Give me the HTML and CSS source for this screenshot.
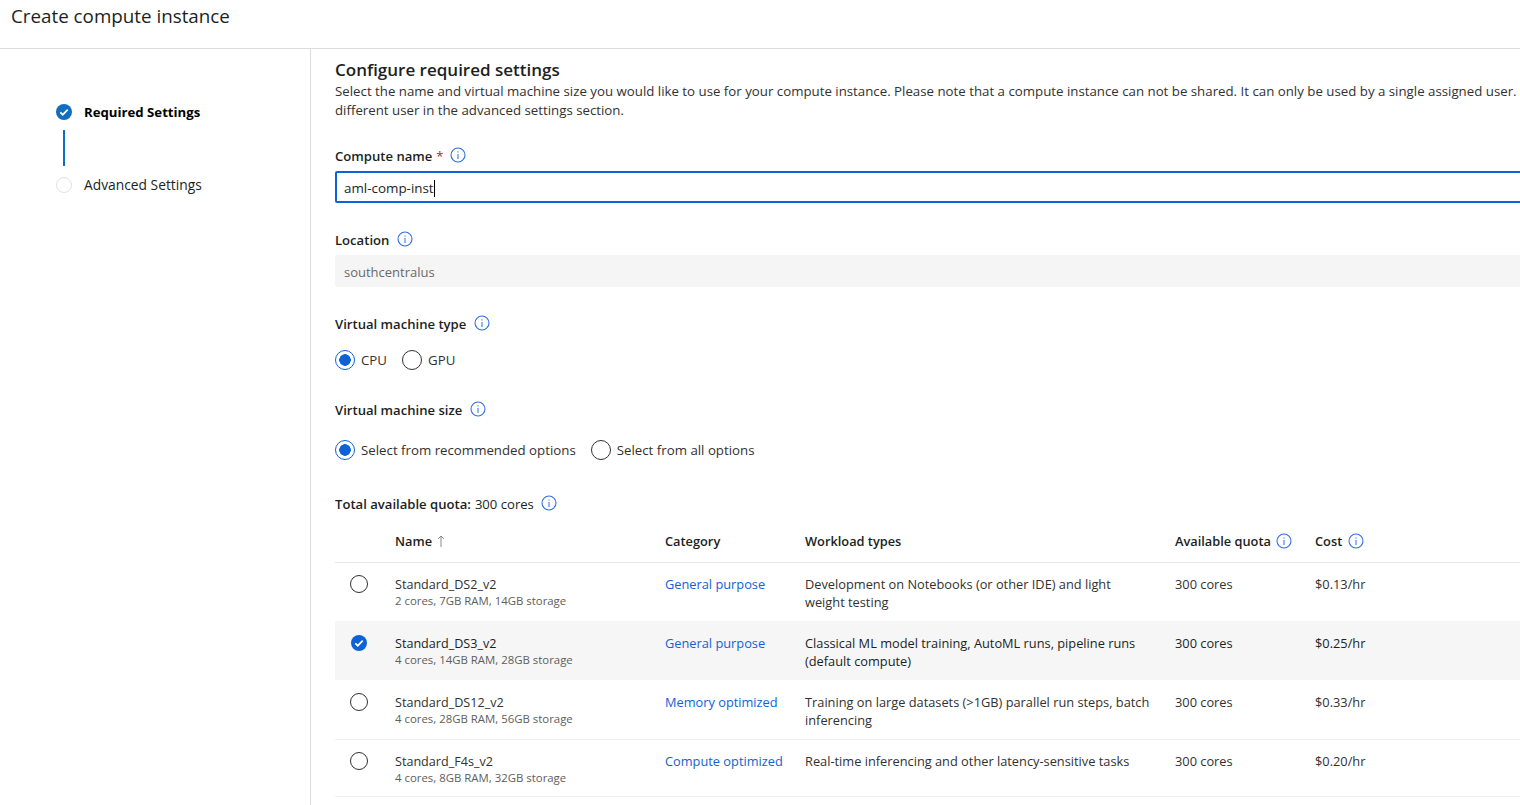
FILE: index.html
```html
<!DOCTYPE html>
<html lang="en">
<head>
    <meta charset="UTF-8">
    <title>Create compute instance</title>
    <link rel="stylesheet" href="styles.css">
</head>
<body>
    <svg class="defs" width="0" height="0">
        <symbol id="info" viewBox="0 0 16 16">
            <circle cx="8" cy="8" r="7" fill="none" stroke="#2f6fe0" stroke-width="1.1"/>
            <rect x="7.5" y="7" width="1" height="5" fill="#2f6fe0"/>
            <rect x="7.5" y="4.3" width="1" height="1.2" fill="#2f6fe0"/>
        </symbol>
        <symbol id="check" viewBox="0 0 16 16">
            <circle cx="8" cy="8" r="8" fill="currentColor"/>
            <path d="M4.3 8.3l2.5 2.4 4.9-5" fill="none" stroke="#fff" stroke-width="1.7"/>
        </symbol>
    </svg>

    <header class="page-header">Create compute instance</header>

    <div class="layout">
        <nav class="steps">
            <div class="step step-done">
                <svg class="step-icon"><use href="#check"/></svg>
                <span>Required Settings</span>
            </div>
            <div class="step-line"></div>
            <div class="step step-next">
                <span class="step-circle"></span>
                <span>Advanced Settings</span>
            </div>
        </nav>

        <main class="content">
            <h2>Configure required settings</h2>
            <p class="intro">Select the name and virtual machine size you would like to use for your compute instance. Please note that a compute instance can not be shared. It can only be used by a single assigned user.<br>different user in the advanced settings section.</p>

            <div class="label label-name">Compute name <span class="req">*</span> <svg class="info"><use href="#info"/></svg></div>
            <div class="input input-active"><span>aml-comp-inst</span><span class="caret"></span></div>

            <div class="label label-location">Location <svg class="info"><use href="#info"/></svg></div>
            <div class="input input-disabled">southcentralus</div>

            <div class="label label-type">Virtual machine type <svg class="info"><use href="#info"/></svg></div>
            <div class="radios radios-type">
                <label class="radio"><span class="dot on"></span>CPU</label>
                <label class="radio"><span class="dot"></span>GPU</label>
            </div>

            <div class="label label-size">Virtual machine size <svg class="info"><use href="#info"/></svg></div>
            <div class="radios radios-size">
                <label class="radio"><span class="dot on"></span>Select from recommended options</label>
                <label class="radio"><span class="dot"></span>Select from all options</label>
            </div>

            <div class="label label-quota">Total available quota: <span class="normal">300 cores</span> <svg class="info"><use href="#info"/></svg></div>

            <div class="table">
                <div class="row head">
                    <div></div>
                    <div>Name <svg class="sort" viewBox="0 0 8 12"><path d="M4 12V1M1.2 3.8L4 1l2.8 2.8" fill="none" stroke="#8f8a80"/></svg></div>
                    <div>Category</div>
                    <div>Workload types</div>
                    <div>Available quota <svg class="info"><use href="#info"/></svg></div>
                    <div>Cost <svg class="info"><use href="#info"/></svg></div>
                </div>
                <div class="row row-before">
                    <div><span class="pick"></span></div>
                    <div class="name">Standard_DS2_v2<small>2 cores, 7GB RAM, 14GB storage</small></div>
                    <div><a>General purpose</a></div>
                    <div>Development on Notebooks (or other IDE) and light weight testing</div>
                    <div>300 cores</div>
                    <div>$0.13/hr</div>
                </div>
                <div class="row selected">
                    <div><svg class="picked"><use href="#check"/></svg></div>
                    <div class="name">Standard_DS3_v2<small>4 cores, 14GB RAM, 28GB storage</small></div>
                    <div><a>General purpose</a></div>
                    <div>Classical ML model training, AutoML runs, pipeline runs (default compute)</div>
                    <div>300 cores</div>
                    <div>$0.25/hr</div>
                </div>
                <div class="row row-after">
                    <div><span class="pick"></span></div>
                    <div class="name">Standard_DS12_v2<small>4 cores, 28GB RAM, 56GB storage</small></div>
                    <div><a>Memory optimized</a></div>
                    <div>Training on large datasets (&gt;1GB) parallel run steps, batch inferencing</div>
                    <div>300 cores</div>
                    <div>$0.33/hr</div>
                </div>
                <div class="row row-last">
                    <div><span class="pick"></span></div>
                    <div class="name">Standard_F4s_v2<small>4 cores, 8GB RAM, 32GB storage</small></div>
                    <div><a>Compute optimized</a></div>
                    <div>Real-time inferencing and other latency-sensitive tasks</div>
                    <div>300 cores</div>
                    <div>$0.20/hr</div>
                </div>
            </div>
        </main>
    </div>
</body>
</html>
```

FILE: styles.css
```css
html, body {
    height: 100%;
}

body {
    margin: 0;
    font-family: "Open Sans", "Noto Sans", sans-serif;
    font-size: 13.27px;
    color: #323130;
    background-color: #fff;
    overflow: hidden;
}

.defs {
    display: block;
    height: 0;
}

.page-header {
    height: 48px;
    padding-left: 11px;
    font-size: 18.8px;
    line-height: 33px;
    border-bottom: 1px solid #dcdcdc;
    color: #201f1e;
}

.layout {
    display: flex;
    height: 756px;
}

.steps {
    width: 311px;
    flex: none;
    box-sizing: border-box;
    padding: 54px 0 0 56px;
    border-right: 1px solid #dcdcdc;
}

.step {
    display: flex;
    align-items: center;
    gap: 12px;
    height: 18px;
    font-size: 13.8px;
    color: #201f1e;
}

.step-done {
    font-size: 13.2px;
    font-weight: 700;
    color: #000;
}

.step-next span:last-child {
    margin-top: -2px;
}

.step-icon {
    width: 16px;
    height: 16px;
    color: #106ebe;
}

.step-circle {
    width: 14px;
    height: 14px;
    border: 1px solid #e6e1e1;
    border-radius: 50%;
}

.step-line {
    width: 2px;
    height: 36px;
    margin: 9px 0 10px 7px;
    background-color: #106ebe;
}

.content {
    flex: 1;
    min-width: 0;
    padding-left: 24px;
    overflow: hidden;
}

h2 {
    margin: 9px 0 0;
    font-size: 17px;
    line-height: 24px;
    font-weight: 600;
    color: #201f1e;
}

.intro {
    width: 1300px;
    margin: 0;
    line-height: 19px;
    white-space: nowrap;
}

.label {
    display: flex;
    align-items: center;
    gap: 4px;
    height: 20px;
    font-size: 13.1px;
    font-weight: 600;
    color: #201f1e;
}

.label-name { margin-top: 26px; }
.label-location { margin-top: 27px; }
.label-type { margin-top: 27px; }
.label-size { margin-top: 30px; }
.label-quota { margin-top: 34px; }

.normal {
    font-weight: 400;
}

.req {
    font-weight: 400;
    color: #a4262c;
}

.info {
    width: 16px;
    height: 16px;
    margin: -3px 0 0 4px;
    flex: none;
}

.label-name .info {
    margin-left: 2px;
}

.label-quota .info {
    margin-left: 3px;
}

.input {
    width: 1300px;
    height: 32px;
    box-sizing: border-box;
    margin-top: 5px;
    padding-left: 9px;
    display: flex;
    align-items: center;
}

.input-active {
    border: 2px solid #0f62d6;
    border-radius: 2px;
    padding: 2px 0 0 7px;
    font-size: 13.4px;
    color: #201f1e;
}

.input-disabled {
    padding-top: 2px;
    background-color: #f5f5f5;
    font-size: 13px;
    color: #6b6a69;
    border-radius: 2px;
}

.caret {
    width: 1px;
    height: 17px;
    background-color: #000;
}

.radios {
    display: flex;
}

.radios-type { margin-top: 16px; gap: 15px; }
.radios-size { margin-top: 20px; gap: 15px; }

.radio {
    display: flex;
    align-items: center;
    gap: 6px;
    height: 20px;
}

.dot {
    width: 20px;
    height: 20px;
    box-sizing: border-box;
    border: 1px solid #323130;
    border-radius: 50%;
}

.dot.on {
    border-color: #0f62d6;
    background: radial-gradient(circle, #0f62d6 0 5.5px, #fff 6px);
}

.table {
    width: 1185px;
    margin-top: 7px;
    font-size: 12.8px;
}

.row {
    display: grid;
    grid-template-columns: 60px 270px 140px 370px 140px 1fr;
    box-sizing: border-box;
    line-height: 18px;
    border-bottom: 1px solid #efefef;
}

.row > div:nth-child(4) {
    padding-right: 24px;
}

.name {
    padding-top: 1px;
    font-size: 12.6px;
}

.head {
    height: 42px;
    padding-bottom: 2px;
    align-items: center;
    font-weight: 600;
    color: #201f1e;
    border-bottom: 1px solid #e8e8e8;
}

.head .info {
    vertical-align: -3px;
    margin: 0 0 0 2px;
}

.row-before {
    height: 58px;
    padding-top: 12px;
    border-bottom: none;
}

.selected {
    height: 59px;
    padding-top: 13px;
    background-color: #f6f6f6;
    border-bottom: none;
    color: #201f1e;
}

.row-after {
    height: 60px;
    padding-top: 13px;
}

.row-last {
    height: 57px;
    padding-top: 12px;
}

.row small {
    display: block;
    margin-top: -1px;
    font-size: 11.4px;
    line-height: 16px;
    color: #605e5c;
}

.row a {
    color: #0f62d6;
}

.sort {
    width: 8px;
    height: 12px;
    margin-left: 2px;
    vertical-align: -1px;
}

.pick {
    display: block;
    width: 18px;
    height: 18px;
    box-sizing: border-box;
    margin: 0 0 0 15px;
    border: 1px solid #323130;
    border-radius: 50%;
}

.picked {
    display: block;
    width: 16px;
    height: 16px;
    margin: 1px 0 0 16px;
    color: #0f62d6;
}
```
